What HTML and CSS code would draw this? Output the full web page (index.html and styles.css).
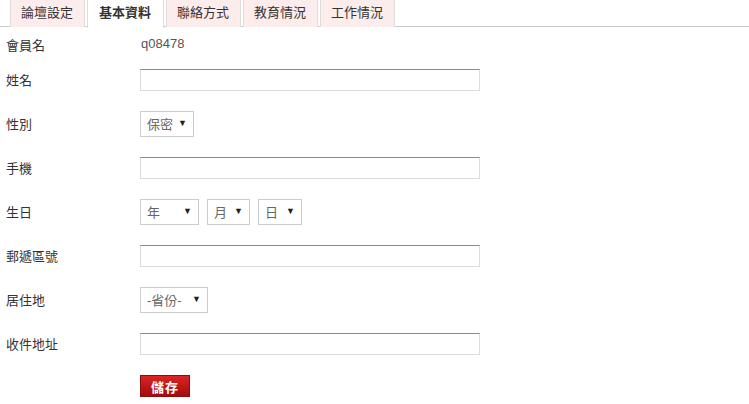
FILE: index.html
```html
<!DOCTYPE html>
<html lang="zh-Hant">
<head>
  <meta charset="UTF-8" />
  <title>基本資料</title>
  <link rel="stylesheet" href="styles.css">
</head>
<body>

  <!-- Tabs -->
  <ul class="tabs">
    <li>論壇設定</li>
    <li class="active">基本資料</li>
    <li>聯絡方式</li>
    <li>教育情況</li>
    <li>工作情況</li>
  </ul>

  <!-- Profile form -->
  <form class="profile">
    <div class="row first">
      <label>會員名</label>
      <span class="value">q08478</span>
    </div>
    <div class="row">
      <label>姓名</label>
      <input type="text" class="text">
    </div>
    <div class="row">
      <label>性別</label>
      <span class="pick w-sex"><select><option>保密</option><option>男</option><option>女</option></select></span>
    </div>
    <div class="row">
      <label>手機</label>
      <input type="text" class="text">
    </div>
    <div class="row">
      <label>生日</label>
      <div class="dates">
        <span class="pick w-year"><select><option>年</option></select></span>
        <span class="pick w-month"><select><option>月</option></select></span>
        <span class="pick w-day"><select><option>日</option></select></span>
      </div>
    </div>
    <div class="row">
      <label>郵遞區號</label>
      <input type="text" class="text">
    </div>
    <div class="row">
      <label>居住地</label>
      <span class="pick w-prov"><select><option>-省份-</option></select></span>
    </div>
    <div class="row">
      <label>收件地址</label>
      <input type="text" class="text">
    </div>
    <div class="row last">
      <span></span>
      <button type="button" class="save">儲存</button>
    </div>
  </form>

</body>
</html>
```

FILE: styles.css
```css
* { margin: 0; padding: 0; box-sizing: border-box; }
body {
  font-family: "Liberation Sans", "Noto Sans CJK TC", sans-serif;
  font-size: 13px;
  color: #333;
  background: #fff;
  padding: 0 6px;
}

.tabs {
  list-style: none;
  display: flex;
  gap: 2px;
  height: 27px;
  margin: 0 -6px;
  padding-left: 10px;
  border-bottom: 1px solid #ccc;
}
.tabs li {
  height: 27px;
  line-height: 25px;
  padding: 0 11px 0 10px;
  background: #fdecec;
  border: 1px solid #ddd;
  border-top: none;
  border-bottom: none;
  color: #333;
}
.tabs li.active {
  background: #fff;
  font-weight: bold;
  height: 28px;
  padding: 0 12px 0 11px;
}

.profile { padding-top: 5px; }

.row {
  display: grid;
  grid-template-columns: 134px auto;
  align-items: center;
  justify-items: start;
  height: 44px;
}
.row.first { height: 26px; }
.row.last { height: 40px; }
.row label { margin-top: -1px; }

.value { color: #555; padding-left: 1px; margin-top: -3px; }

.text {
  width: 340px;
  height: 22px;
  border: 1px solid #dcdcdc;
  border-top-color: #8a8a8a;
  background: #fff;
}

.dates { display: flex; gap: 8px; }

.pick {
  position: relative;
  display: inline-block;
  height: 26px;
}
.pick select {
  appearance: none;
  -webkit-appearance: none;
  width: 100%;
  height: 26px;
  padding: 0 0 0 6px;
  border: 1px solid #ccc;
  background: #fff;
  color: #666;
  font: inherit;
  border-radius: 0;
}
.pick::after {
  content: "▼";
  position: absolute;
  right: 7px;
  top: 8px;
  font-size: 9px;
  line-height: 9px;
  color: #222;
  pointer-events: none;
}
.w-sex { width: 54px; }
.w-year { width: 59px; }
.w-month { width: 43px; }
.w-day { width: 44px; }
.w-prov { width: 68px; }

.save {
  width: 50px;
  height: 22px;
  border: 1px solid #8e0b0b;
  background: linear-gradient(#d92525, #a50a0a);
  color: #fff;
  font: bold 13px "Liberation Sans", "Noto Sans CJK TC", sans-serif;
  letter-spacing: 1px;
}
```
